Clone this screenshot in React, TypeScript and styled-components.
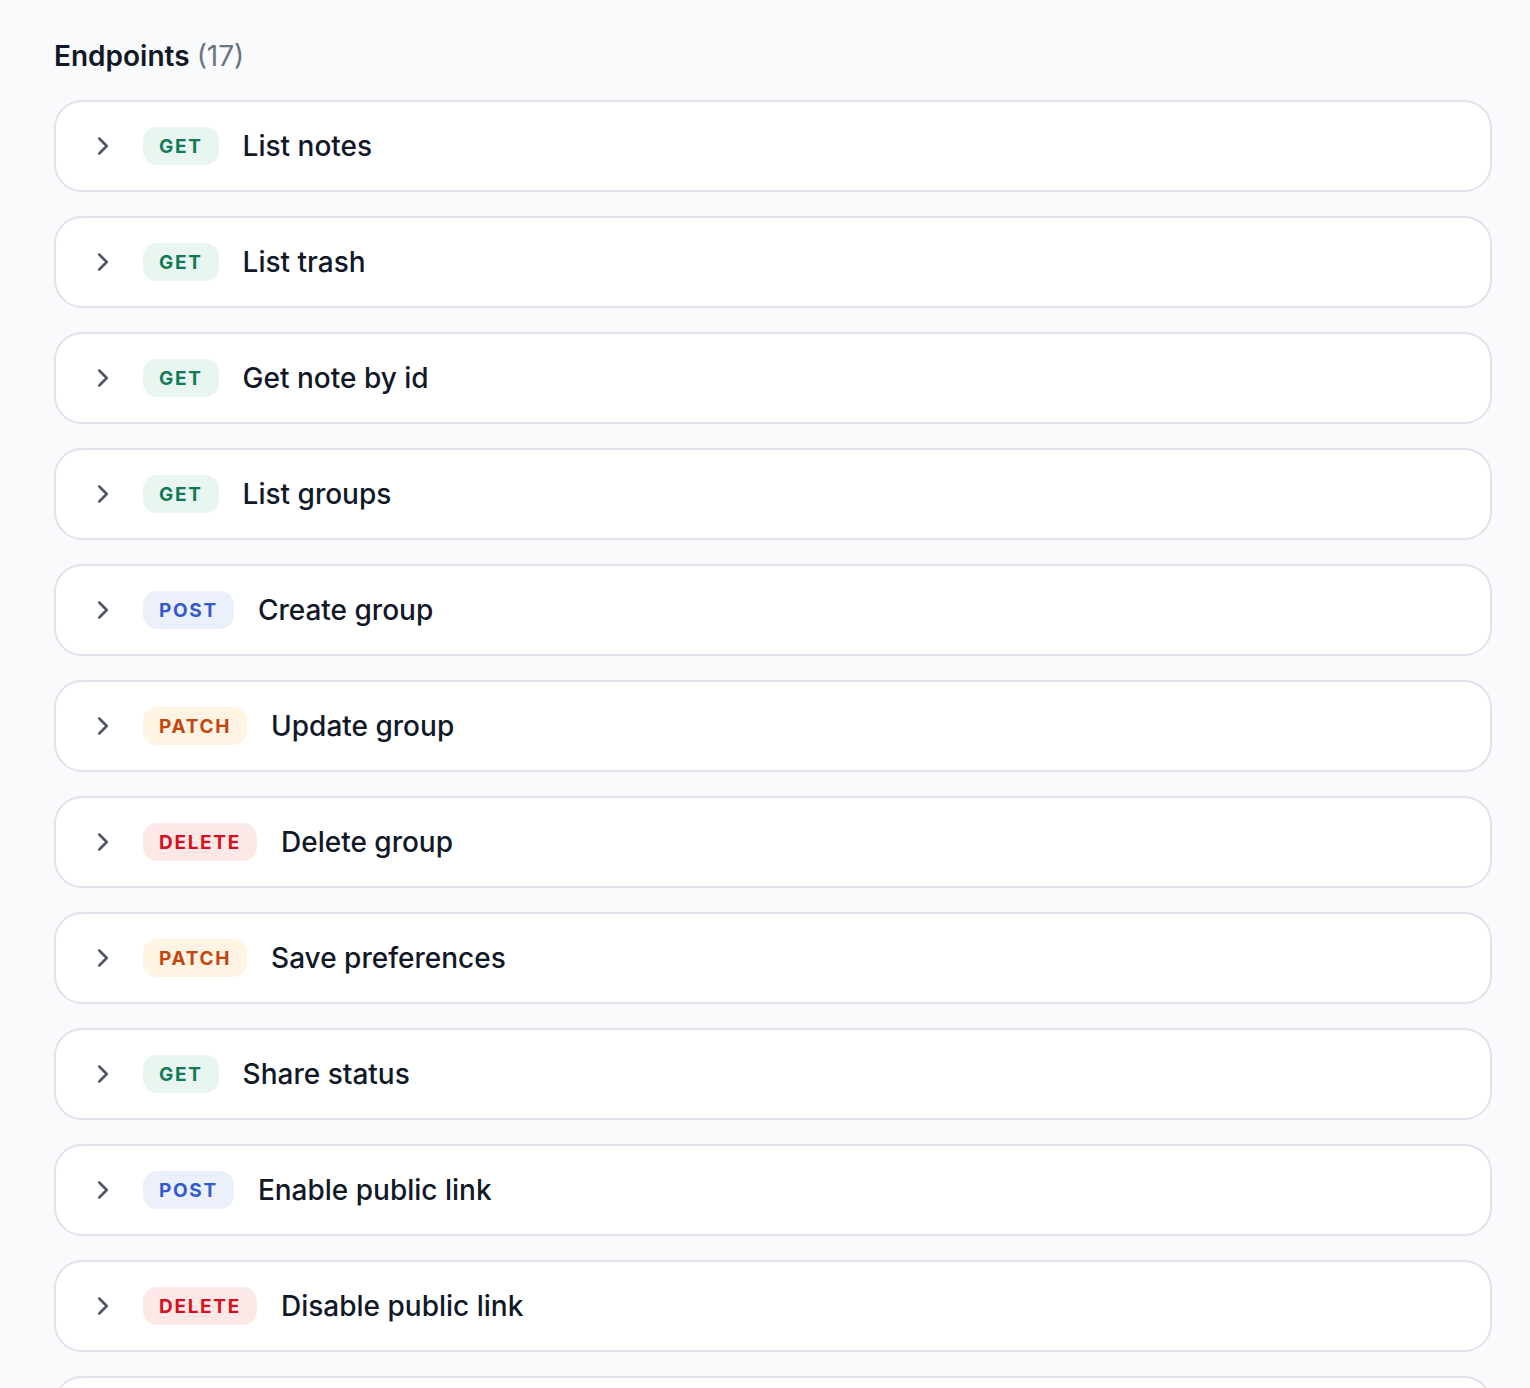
import React from "react";
import styled, { createGlobalStyle } from "styled-components";

type Method = "GET" | "POST" | "PATCH" | "DELETE";

type Endpoint = {
  id: number;
  method: Method;
  name: string;
};

const endpoints: Endpoint[] = [
  { id: 1, method: "GET", name: "List notes" },
  { id: 2, method: "GET", name: "List trash" },
  { id: 3, method: "GET", name: "Get note by id" },
  { id: 4, method: "GET", name: "List groups" },
  { id: 5, method: "POST", name: "Create group" },
  { id: 6, method: "PATCH", name: "Update group" },
  { id: 7, method: "DELETE", name: "Delete group" },
  { id: 8, method: "PATCH", name: "Save preferences" },
  { id: 9, method: "GET", name: "Share status" },
  { id: 10, method: "POST", name: "Enable public link" },
  { id: 11, method: "DELETE", name: "Disable public link" },
  { id: 12, method: "GET", name: "Get public note" },
  { id: 13, method: "POST", name: "Create note" },
  { id: 14, method: "PATCH", name: "Update note" },
  { id: 15, method: "DELETE", name: "Delete note" },
  { id: 16, method: "POST", name: "Restore note" },
  { id: 17, method: "GET", name: "Get preferences" },
];

const methodColors: Record<Method, { bg: string; fg: string }> = {
  GET: { bg: "#e8f6ef", fg: "#107a56" },
  POST: { bg: "#ebf0fa", fg: "#3459d1" },
  PATCH: { bg: "#fff4e3", fg: "#c2470e" },
  DELETE: { bg: "#fde8e8", fg: "#d4111d" },
};

const GlobalStyle = createGlobalStyle`
  body {
    margin: 0;
    background: #f9fafc;
    font-family: Inter, "Noto Sans", sans-serif;
    color: #111827;
  }
`;

const Page = styled.div`
  padding: 40px 38px 40px 54px;
`;

const Heading = styled.h2`
  margin: 0 0 28px;
  font-size: 28px;
  line-height: 32px;
  font-weight: 600;
  color: #111827;

  .count {
    font-weight: 400;
    color: #6b7280;
  }
`;

const List = styled.div`
  display: flex;
  flex-direction: column;
  gap: 24px;
`;

const Card = styled.div`
  display: flex;
  align-items: center;
  height: 92px;
  box-sizing: border-box;
  padding: 0 32px;
  background: #ffffff;
  border: 2px solid #e1e3eb;
  border-radius: 28px;
  cursor: pointer;
`;

const Chevron = styled.svg`
  flex: none;
  width: 30px;
  height: 30px;
  color: #4b5563;
  margin-right: 25px;
`;

const Badge = styled.span<{ $bg: string; $fg: string }>`
  display: inline-flex;
  align-items: center;
  height: 38px;
  padding: 0 16px;
  border-radius: 14px;
  background: ${(p) => p.$bg};
  color: ${(p) => p.$fg};
  font-size: 19px;
  font-weight: 700;
  letter-spacing: 1.7px;
  margin-right: 24px;
`;

const Title = styled.span`
  font-size: 28px;
  font-weight: 500;
  color: #111827;
`;

const App: React.FC = () => {
  return (
    <Page>
      <GlobalStyle />
      <Heading>
        Endpoints <span className="count">({endpoints.length})</span>
      </Heading>
      <List>
        {endpoints.map((ep) => (
          <Card key={ep.id}>
            <Chevron
              viewBox="0 0 24 24"
              fill="none"
              stroke="currentColor"
              strokeWidth="2"
              strokeLinecap="round"
              strokeLinejoin="round"
            >
              <path d="m9 18 6-6-6-6" />
            </Chevron>
            <Badge $bg={methodColors[ep.method].bg} $fg={methodColors[ep.method].fg}>
              {ep.method}
            </Badge>
            <Title>{ep.name}</Title>
          </Card>
        ))}
      </List>
    </Page>
  );
};

export default App;
